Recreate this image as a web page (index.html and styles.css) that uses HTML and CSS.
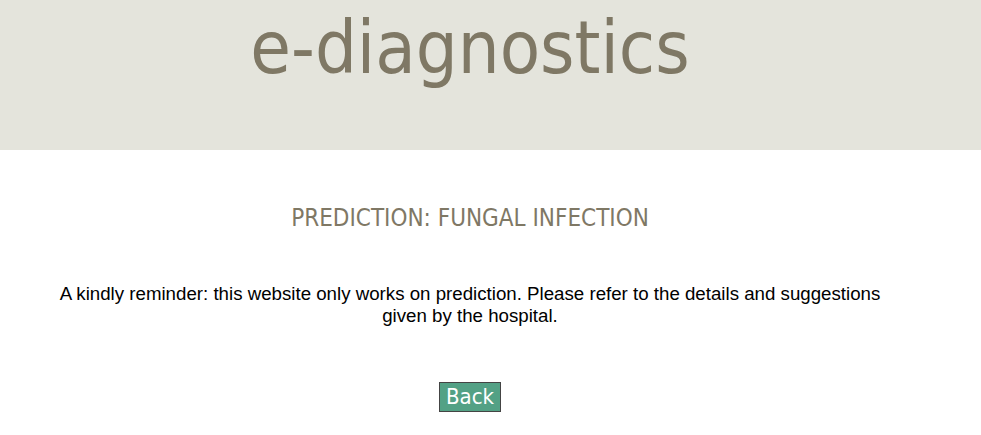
FILE: index.html
```html
<!DOCTYPE html>
<html>
<head>
<meta charset="utf-8">
<link rel="stylesheet" href="styles.css">
</head>
<body>
<header class="header">
  <div class="wrap">
    <h1 class="logo">e-diagnostics</h1>
  </div>
</header>
<main class="wrap content">
  <h2 class="prediction">PREDICTION: FUNGAL INFECTION</h2>
  <p class="reminder">A kindly reminder: this website only works on prediction. Please refer to the details and suggestions given by the hospital.</p>
  <div class="actions"><button class="back">Back</button></div>
</main>
</body>
</html>
```
FILE: styles.css
```css
html, body { margin: 0; padding: 0; background: #fff; }
.header { background: #e4e4dc; height: 150px; }
.wrap { width: 940px; }
.logo {
  margin: 0;
  text-align: center;
  font-family: "DejaVu Sans Condensed", "DejaVu Sans", sans-serif;
  font-weight: normal;
  font-size: 73.5px;
  color: #7f7865;
  line-height: 96px;
}
.content { padding: 0 50px; box-sizing: border-box; }
.prediction {
  margin: 53px 0 0;
  text-align: center;
  font-family: "DejaVu Sans Condensed", "DejaVu Sans", sans-serif;
  font-weight: normal;
  font-size: 24px;
  color: #7f7865;
  line-height: 30px;
}
.reminder {
  margin: 50px 0 0;
  text-align: center;
  font-family: "Liberation Sans", Arial, sans-serif;
  font-size: 18.7px;
  line-height: 22px;
  color: #000;
}
.actions { text-align: center; margin-top: 55px; }
.back {
  font-family: "DejaVu Sans Condensed", "DejaVu Sans", sans-serif;
  font-size: 22px;
  line-height: 26px;
  color: #fff;
  background: #53a185;
  border: 1px solid #444;
  padding: 1px 6px;
  border-radius: 0;
}
```
